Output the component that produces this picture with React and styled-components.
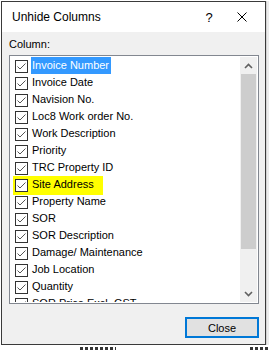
import React from 'react';
import styled, { createGlobalStyle } from 'styled-components';

const GlobalStyle = createGlobalStyle`
  html, body {
    margin: 0;
    padding: 0;
  }
  body {
    background: #ffffff;
    font-family: "Liberation Sans", Arial, sans-serif;
  }
`;

const columns = [
  'Invoice Number',
  'Invoice Date',
  'Navision No.',
  'Loc8 Work order No.',
  'Work Description',
  'Priority',
  'TRC Property ID',
  'Site Address',
  'Property Name',
  'SOR',
  'SOR Description',
  'Damage/ Maintenance',
  'Job Location',
  'Quantity',
  'SOR Price Excl. GST',
];

const Screen = styled.div`
  width: 269px;
  height: 350px;
  overflow: hidden;
  display: flex;
  flex-direction: column;
  background: #ffffff;
`;

const Top = styled.div`
  display: flex;
  height: 345px;
  padding: 1px 0 0 1px;
  box-sizing: border-box;
`;

const SideStrip = styled.div`
  flex: 1;
  background: #ececec;
  border-left: 1px solid #d4d4d4;
`;

// spreadsheet cells peeking out under the dialog
const SheetStrip = styled.div`
  height: 5px;
  margin-top: 2px;
  background:
    repeating-linear-gradient(90deg, #333 0 3px, transparent 3px 5px) 80px 0 / 36px 3px no-repeat,
    repeating-linear-gradient(90deg, #333 0 3px, transparent 3px 5px) 250px 0 / 18px 3px no-repeat;
`;

const Dialog = styled.div`
  width: 265px;
  height: 344px;
  box-sizing: border-box;
  border: 1px solid #3a3a3a;
  display: flex;
  flex-direction: column;
  background: #f0f0f0;
`;

const TitleBar = styled.div`
  height: 30px;
  flex: none;
  background: #ffffff;
  display: flex;
  align-items: center;
  padding-left: 10px;
  font-size: 12px;
  color: #000;
`;

const Title = styled.span`
  flex: 1;
`;

const TitleButton = styled.span`
  width: ${p => p.$w}px;
  display: flex;
  justify-content: center;
  align-items: center;
  font-size: 13px;
`;

const Body = styled.div`
  flex: 1;
  display: flex;
  flex-direction: column;
  padding: 5px 6px 6px 7px;
`;

const Label = styled.div`
  font-size: 11px;
  line-height: 15px;
  height: 15px;
  margin-bottom: 3px;
  color: #000;
`;

const ListBox = styled.div`
  height: 249px;
  box-sizing: border-box;
  border: 1px solid #828790;
  background: #ffffff;
  padding: 1px;
  display: flex;
  overflow: hidden;
`;

const Rows = styled.div`
  flex: 1;
  overflow: hidden;
`;

const Row = styled.div`
  height: 17px;
  display: flex;
  align-items: flex-start;
  padding-left: ${p => (p.$marked ? 2 : 4)}px;
`;

const Marker = styled.div`
  display: flex;
  align-items: flex-start;
  height: ${p => (p.$on ? 19 : 17)}px;
  padding: ${p => (p.$on ? '0 7px 0 2px' : '0')};
  background: ${p => (p.$on ? '#ffff00' : 'transparent')};
`;

const Box = styled.span`
  width: 13px;
  height: 13px;
  margin-top: 3px;
  box-sizing: border-box;
  border: 1px solid #333333;
  background: #ffffff;
  display: flex;
  flex: none;
`;

const ItemText = styled.span`
  margin-left: 3px;
  padding: 0 2px 0 1px;
  height: 17px;
  line-height: 17px;
  font-size: 11px;
  white-space: nowrap;
  color: ${p => (p.$selected ? '#ffffff' : '#000000')};
  background: ${p => (p.$selected ? '#3399ff' : 'transparent')};
`;

const ScrollBar = styled.div`
  width: 17px;
  flex: none;
  display: flex;
  flex-direction: column;
  background: #f0f0f0;
`;

const Arrow = styled.div`
  height: 17px;
  flex: none;
  display: flex;
  align-items: center;
  justify-content: center;
`;

const Thumb = styled.div`
  height: 175px;
  margin: 0 1px;
  background: #cdcdcd;
`;

const Track = styled.div`
  flex: 1;
`;

const Footer = styled.div`
  display: flex;
  justify-content: flex-end;
  margin-top: 13px;
`;

const Button = styled.button`
  width: 74px;
  height: 21px;
  box-sizing: border-box;
  border: 2px solid #0078d7;
  background: #e1e1e1;
  font-family: inherit;
  font-size: 11px;
  color: #000;
  padding: 0;
`;

const Check = () => (
  <svg width="11" height="11" viewBox="0 0 11 11">
    <polyline points="1.5,5.5 4,8 9.5,2.5" fill="none" stroke="#555" strokeWidth="1" />
  </svg>
);

const Chevron = ({ down }) => (
  <svg width="9" height="6" viewBox="0 0 9 6">
    <polyline
      points={down ? '1,1 4.5,4.5 8,1' : '1,5 4.5,1.5 8,5'}
      fill="none"
      stroke="#606060"
      strokeWidth="1.6"
    />
  </svg>
);

const CloseX = () => (
  <svg width="10" height="10" viewBox="0 0 10 10">
    <path d="M0.5 0.5 L9.5 9.5 M9.5 0.5 L0.5 9.5" stroke="#000" strokeWidth="1" />
  </svg>
);

export default function App() {
  return (
    <Screen>
      <GlobalStyle />
      <Top>
        <Dialog>
          <TitleBar>
            <Title>Unhide Columns</Title>
            <TitleButton $w={20}>?</TitleButton>
            <TitleButton $w={46}><CloseX /></TitleButton>
          </TitleBar>
          <Body>
            <Label>Column:</Label>
            <ListBox>
              <Rows>
                {columns.map((name, i) => {
                  const marked = name === 'Site Address';
                  return (
                    <Row key={name} $marked={marked}>
                      <Marker $on={marked}>
                        <Box><Check /></Box>
                        <ItemText $selected={i === 0}>{name}</ItemText>
                      </Marker>
                    </Row>
                  );
                })}
              </Rows>
              <ScrollBar>
                <Arrow><Chevron /></Arrow>
                <Thumb />
                <Track />
                <Arrow><Chevron down /></Arrow>
              </ScrollBar>
            </ListBox>
            <Footer>
              <Button>Close</Button>
            </Footer>
          </Body>
        </Dialog>
        <SideStrip />
      </Top>
      <SheetStrip />
    </Screen>
  );
}
